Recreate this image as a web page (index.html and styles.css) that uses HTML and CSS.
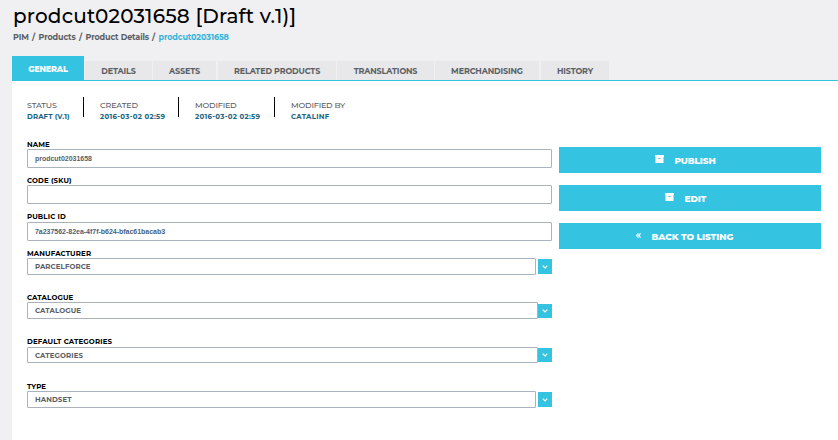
FILE: index.html
```html
<!DOCTYPE html>
<html lang="en">
<head>
<meta charset="utf-8">
<title>Product Details</title>
<link rel="stylesheet" href="styles.css">
</head>
<body>
<header class="head">
  <h1>prodcut02031658 [Draft v.1)]</h1>
  <nav class="crumbs"><span class="c1">PIM</span><i>/</i><span class="c2">Products</span><i>/</i><span class="c3">Product Details</span><i>/</i><a class="c4">prodcut02031658</a></nav>
</header>
<nav class="tabs">
  <a class="tab active">GENERAL</a>
  <a class="tab details">DETAILS</a>
  <a class="tab assets">ASSETS</a>
  <a class="tab related">RELATED PRODUCTS</a>
  <a class="tab translations">TRANSLATIONS</a>
  <a class="tab merch">MERCHANDISING</a>
  <a class="tab history">HISTORY</a>
</nav>
<main class="panel">
  <section class="meta">
    <div class="m1"><span>STATUS</span><b>DRAFT (V.1)</b></div>
    <div class="m2"><span>CREATED</span><b>2016-03-02 02:59</b></div>
    <div class="m3"><span>MODIFIED</span><b>2016-03-02 02:59</b></div>
    <div class="m4"><span>MODIFIED BY</span><b>CATALINF</b></div>
  </section>
  <div class="columns">
    <form class="fields">
      <div class="field f-name"><label>NAME</label><div class="box id name">prodcut02031658</div></div>
      <div class="field f-code"><label>CODE (SKU)</label><div class="box"></div></div>
      <div class="field f-public"><label>PUBLIC ID</label><div class="box id public">7a237562-82ea-4f7f-b624-bfac61bacab3</div></div>
      <div class="field f-manufacturer"><label>MANUFACTURER</label><div class="select"><div class="box">PARCELFORCE</div><span class="arrow"><svg viewBox="0 0 6 4"><path d="M.7.7 3 3 5.3.7"/></svg></span></div></div>
      <div class="field f-catalogue"><label>CATALOGUE</label><div class="select joined"><div class="box">CATALOGUE</div><span class="arrow"><svg viewBox="0 0 6 4"><path d="M.7.7 3 3 5.3.7"/></svg></span></div></div>
      <div class="field f-categories"><label>DEFAULT CATEGORIES</label><div class="select joined"><div class="box">CATEGORIES</div><span class="arrow"><svg viewBox="0 0 6 4"><path d="M.7.7 3 3 5.3.7"/></svg></span></div></div>
      <div class="field f-type"><label>TYPE</label><div class="select"><div class="box">HANDSET</div><span class="arrow"><svg viewBox="0 0 6 4"><path d="M.7.7 3 3 5.3.7"/></svg></span></div></div>
    </form>
    <aside class="actions">
      <a class="btn publish"><svg class="archive" viewBox="0 0 9 8"><path d="M0 0h9v2H0zM.5 2h8v6h-8zM3.5 3v1h2V3z" fill-rule="evenodd"/></svg><span>PUBLISH</span></a>
      <a class="btn edit"><svg class="archive" viewBox="0 0 9 8"><path d="M0 0h9v2H0zM.5 2h8v6h-8zM3.5 3v1h2V3z" fill-rule="evenodd"/></svg><span>EDIT</span></a>
      <a class="btn back"><svg class="chevrons" viewBox="0 0 5 5"><path d="M2.4.4.6 2.5l1.8 2.1M4.6.4 2.8 2.5l1.8 2.1"/></svg><span>BACK TO LISTING</span></a>
    </aside>
  </div>
</main>
</body>
</html>
```

FILE: styles.css
```css
* { box-sizing: border-box; }
body {
  margin: 0;
  height: 440px;
  overflow: hidden;
  background: #f0f0f2;
  font-family: Montserrat, Inter, "Liberation Sans", sans-serif;
  color: #5b6065;
}
.head { height: 56px; padding: 4px 0 0 13px; }
h1 { margin: 0; font-size: 20px; line-height: 25px; font-weight: 500; color: #000; letter-spacing: .17px; white-space: nowrap; }
.crumbs { display: flex; margin-top: 3px; font-size: 8px; line-height: 11px; font-weight: 700; letter-spacing: -.1px; white-space: nowrap; }
.crumbs i { font-style: normal; width: 10px; text-align: center; }
.crumbs a { color: #35b5dc; }
.c1 { width: 15.5px; }
.c2 { width: 37px; }
.c3 { width: 63px; }
.tabs { display: flex; align-items: flex-end; height: 25px; margin-left: 12px; border-bottom: 1px solid #35c3e2; }
.tab {
  height: 19px;
  margin-right: 1px;
  background: #e8e8ea;
  text-align: center;
  font-size: 8px;
  line-height: 20px;
  font-weight: 700;
  letter-spacing: -.12px;
  white-space: nowrap;
}
.active { width: 72px; height: 24px; line-height: 27px; background: #35c3e2; color: #fff; font-weight: 800; }
.details { width: 67px; }
.assets { width: 63px; margin-right: 2px; }
.related { width: 118px; }
.translations { width: 97px; }
.merch { width: 104px; margin-right: 2px; }
.history { width: 68px; }
.panel { margin-left: 12px; height: 359px; padding: 16px 0 0 15px; background: #fff; }
.meta { display: flex; height: 42px; white-space: nowrap; }
.meta div { height: 20px; padding-top: 3px; margin-right: 16px; border-right: 1px solid #000; }
.meta .m4 { border: 0; }
.m1 { width: 57px; }
.m2 { width: 79px; }
.m3 { width: 80px; }
.meta span { display: block; font-size: 8px; line-height: 11px; font-weight: 500; letter-spacing: -.18px; }
.meta b { display: block; font-size: 7px; line-height: 12px; font-weight: 700; color: #1a6482; letter-spacing: .3px; }
.meta .m1 b { letter-spacing: .1px; }
.columns { display: flex; gap: 7px; }
.fields { width: 525px; }
.field label { display: block; height: 10px; font-size: 7px; line-height: 12px; font-weight: 700; color: #000; letter-spacing: .14px; white-space: nowrap; }
.box { height: 19px; border: 1px solid #aab3bc; border-radius: 1px; padding-left: 7px; font-size: 7px; line-height: 16px; font-weight: 700; letter-spacing: .1px; }
.id { font-family: "Liberation Sans", sans-serif; font-weight: 700; letter-spacing: -.02px; line-height: 17px; }
.public { color: #4b6078; }
.f-name { height: 36px; }
.f-code { height: 36px; }
.f-public { height: 37px; }
.f-public label { height: 11px; }
.f-manufacturer { height: 44px; }
.f-catalogue { height: 44px; }
.f-categories { height: 44px; }
.f-categories label { height: 11px; }
.f-type label { height: 11px; line-height: 14px; }
.select { display: flex; justify-content: space-between; align-items: center; height: 17px; }
.select .box { width: 509px; height: 17px; line-height: 15px; }
.joined .box { width: 511px; }
.f-categories .select, .f-categories .box { height: 16px; }
.arrow { display: flex; align-items: center; justify-content: center; width: 14px; height: 15px; background: #35c3e2; }
.joined .arrow { height: 14px; }
.arrow svg { width: 6px; height: 4px; fill: none; stroke: #fff; stroke-width: 1.2; }
.actions { width: 262px; padding-top: 8px; }
.btn { display: flex; height: 26px; margin-bottom: 12px; background: #35c3e2; color: #fff; font-size: 9px; line-height: 27px; font-weight: 800; letter-spacing: -.16px; white-space: nowrap; }
.archive { width: 9px; height: 8px; margin-top: 8px; fill: #fff; }
.chevrons { width: 5px; height: 5px; margin-top: 10px; fill: none; stroke: #fff; stroke-width: 1.2; }
.btn span { margin-left: 10.5px; }
.publish { padding-left: 96px; }
.edit { padding-left: 106px; }
.back { padding-left: 77px; letter-spacing: -.08px; }
```
